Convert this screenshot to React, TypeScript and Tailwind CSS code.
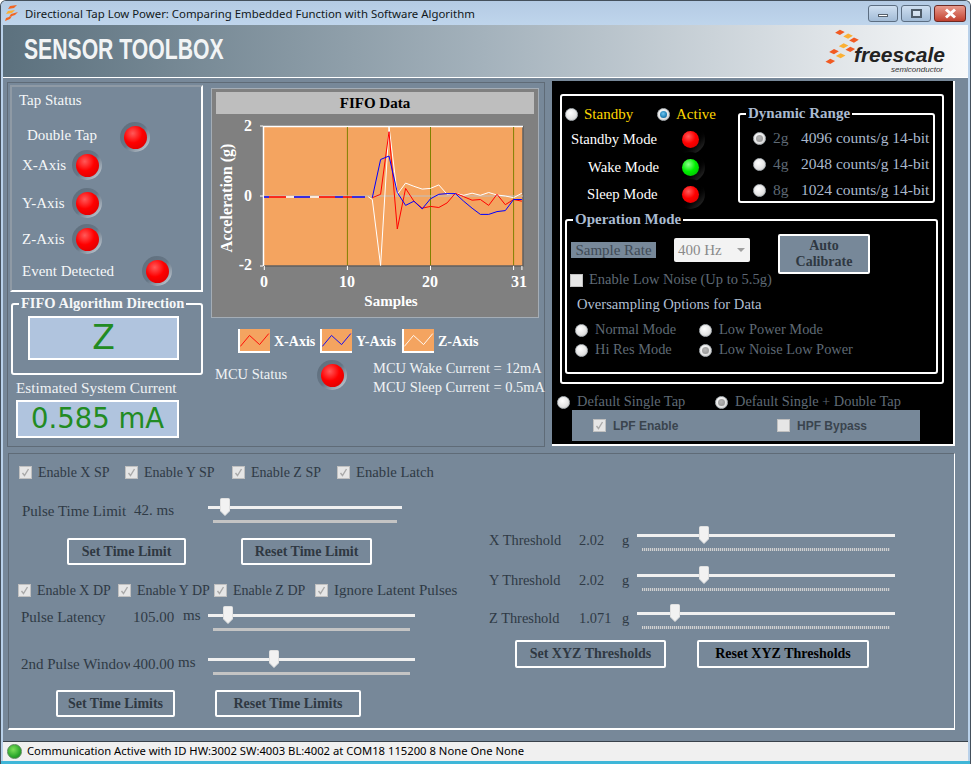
import React from "react";

const S = (s: number) => 264.3 + 8.31 * s;
const V = (v: number) => 196 - 34.75 * v;
const toPts = (d: [number, number][]) => d.map(([s, v]) => `${S(s).toFixed(1)},${V(v).toFixed(1)}`).join(" ");
const redData: [number, number][] = [[0,-0.02],[13,-0.05],[14,0.05],[15,1.85],[16,-0.95],[17,0.22],[18,-0.15],[19,-0.35],[20,-0.3],[21,-0.33],[22,-0.2],[23,0.08],[24,-0.02],[25,-0.12],[26,-0.1],[27,-0.27],[28,0.05],[29,-0.25],[30,-0.1],[31,-0.15]];
const blueData: [number, number][] = [[13,-0.05],[14,1.05],[15,1.15],[16,0.1],[17,-0.27],[18,-0.15],[19,-0.37],[20,-0.08],[21,0.05],[22,0.07],[23,0.07],[24,-0.15],[25,-0.35],[26,-0.53],[27,-0.53],[28,-0.45],[29,-0.42],[30,-0.1],[31,-0.1]];
const whiteData: [number, number][] = [[12.5,-0.02],[13,-0.1],[14,-2],[15,2],[16,0.05],[17,0.37],[18,0.28],[19,0.2],[20,0.22],[21,0.32],[22,0.05],[23,0.08],[24,0.02],[25,0.08],[26,0.02],[27,0.1],[28,0.03],[29,0],[30,-0.05],[31,0.08]];
const baseSegs: [number, number, string][] = [[264,269,"#0000ff"],[269,286,"#ff0000"],[286,294,"#ffffff"],[294,310,"#0000ff"],[310,319,"#ffffff"],[319,335,"#ff0000"],[335,343,"#0000ff"],[343,352,"#ff0000"],[352,365,"#0000ff"]];

function Led({ color = "red", dark = false }: { color?: string; dark?: boolean }) {
  return (
    <div className={`shrink-0 rounded-full flex items-center justify-center w-[30px] h-[30px] ${dark ? "bg-linear-to-br from-[#000000] via-[#000000] to-[#3a3a3a]" : "bg-linear-to-br from-[#5f6e7c] via-[#667686] to-[#d5dce2]"}`}>
      <div className={`rounded-full ${dark ? "w-[17px] h-[17px]" : "w-[23px] h-[23px]"} ${color === "red" ? "bg-[radial-gradient(circle_at_38%_32%,#ff5a5a_0%,#ff0000_45%,#d00000_100%)]" : "bg-[radial-gradient(circle_at_38%_32%,#8cff8c_0%,#00f000_45%,#00b000_100%)]"}`} />
    </div>
  );
}

function Radio({ state = "off" }: { state?: string }) {
  return (
    <div className="shrink-0 w-[13px] h-[13px] rounded-full flex items-center justify-center bg-[radial-gradient(circle_at_40%_35%,#ffffff_0%,#e4e4e4_60%,#bdbdbd_100%)] border border-[#aeb4b8]">
      {state === "on" && <div className="w-[7px] h-[7px] rounded-full bg-[radial-gradient(circle_at_45%_40%,#6fc5f0_0%,#1f7fb5_60%,#0d4f78_100%)]" />}
      {state === "dis" && <div className="w-[7px] h-[7px] rounded-full bg-[radial-gradient(circle_at_45%_40%,#b5b5b5_0%,#8f8f8f_100%)]" />}
    </div>
  );
}

function Check({ on = true }: { on?: boolean }) {
  return (
    <div className="shrink-0 w-[13px] h-[13px] bg-[#e6e6e6] border border-[#c0c0c0] flex items-center justify-center">
      {on && (
        <svg width="9" height="9" viewBox="0 0 9 9">
          <path d="M1.5 5 L3.5 7.5 L7.5 1" fill="none" stroke="#a9a9a9" strokeWidth="1.4" />
        </svg>
      )}
    </div>
  );
}

function Slider({ w, thumb, fine = false }: { w: number; thumb: number; fine?: boolean }) {
  return (
    <div className="relative h-[26px] shrink-0" style={{ width: w }}>
      <div className="absolute left-0 right-0 top-[6px] h-[3px] bg-[#f0f0f0]" />
      <div className={`absolute left-[5px] right-[5px] top-[20px] ${fine ? "h-[3px] bg-[repeating-linear-gradient(90deg,#d0d0d0_0,#d0d0d0_1px,#8b98a5_1px,#8b98a5_2px)]" : "h-[3px] bg-[#c4c4c4]"}`} />
      <svg className="absolute top-[-2px]" style={{ left: thumb - 5 }} width="10" height="18" viewBox="0 0 10 18">
        <path d="M1.5 0.5 H8.5 Q9.5 0.5 9.5 1.5 V13 L5 17.5 L0.5 13 V1.5 Q0.5 0.5 1.5 0.5 Z" fill="#f2f2f2" stroke="#e0e0e0" />
      </svg>
    </div>
  );
}

function Btn({ w, h = 27, dark = false, children, className = "" }: { w: number; h?: number; dark?: boolean; children: React.ReactNode; className?: string }) {
  return (
    <div
      className={`flex items-center justify-center rounded-[2px] border-2 border-white font-bold text-[14px] leading-[16px] text-center bg-[#778899] ${dark ? "text-[#000000]" : "text-[#2f3842]"} ${className}`}
      style={{ width: w, height: h }}
    >
      {children}
    </div>
  );
}

function Swatch({ color, label }: { color: string; label: string }) {
  return (
    <div className="flex items-center w-[82px]">
      <svg width="32" height="24" viewBox="0 0 32 24" className="shrink-0 bg-[#f4a460] border-b-2 border-l-2 border-white">
        <polyline points="0,19 10,7 21,17 31,5" fill="none" stroke={color} strokeWidth="1" />
      </svg>
      <span className="ml-[4px] font-bold text-[14px] text-white">{label}</span>
    </div>
  );
}

function RadioRow({ state, label, className = "" }: { state?: string; label: string; className?: string }) {
  return (
    <div className={`flex items-center ${className}`}>
      <Radio state={state} />
      <span className="ml-[7px] text-[14.4px] text-[#5f6a75]">{label}</span>
    </div>
  );
}

function CheckItem({ label, w, size = "text-[14px]" }: { label: string; w: number; size?: string }) {
  return (
    <div className="flex items-center" style={{ width: w }}>
      <Check />
      <span className={`ml-[6px] text-[#2f3a45] whitespace-nowrap ${size}`}>{label}</span>
    </div>
  );
}

function Logo() {
  const bars: [number, number, string][] = [[318, 97, "#f15a22"],[340, 107, "#fbb034"],[356, 118, "#f15a22"],[328, 133, "#fbb034"],[346, 143, "#f15a22"],[302, 149, "#f15a22"],[320, 160, "#fbb034"],[292, 175, "#f15a22"]];
  return (
    <svg width="37" height="37" viewBox="275 85 100 100" className="shrink-0">
      {bars.map(([x, y, c], i) => (
        <polygon key={i} points={`${x - 13},${y + 1} ${x},${y - 7} ${x + 13},${y - 1} ${x},${y + 7}`} fill={c} />
      ))}
    </svg>
  );
}

export default function App() {
  return (
    <div className="w-[971px] h-[764px] overflow-hidden flex flex-col bg-[#b9d1ea] font-['Liberation_Serif',serif] text-[15px] border-l border-r border-t border-[#44505c] rounded-t-[6px]">
      {/* title bar */}
      <div className="h-[24px] shrink-0 flex items-center bg-linear-to-b from-[#b4cbe4] to-[#bfd5ec] font-['Noto_Sans',sans-serif]">
        <svg width="16" height="18" viewBox="0 0 16 18" className="ml-[4px] shrink-0">
          <polygon points="5,2 12,1 9,4 3,5" fill="#f26522" />
          <polygon points="3,7 10,6 7,9 1,10" fill="#fbb034" />
          <polygon points="6,10 13,8 10,11 4,13" fill="#f26522" />
          <polygon points="1,14 7,12 5,15 0,17" fill="#f26522" />
        </svg>
        <span className="ml-[4px] mt-[2px] text-[11.4px] text-[#111820] whitespace-nowrap">Directional Tap Low Power: Comparing Embedded Function with Software Algorithm</span>
        <div className="ml-auto mr-[4px] flex gap-[3px]">
          <div className="w-[30px] h-[17px] rounded-[3px] border border-[#5c6e82] bg-linear-to-b from-[#cfe0f1] to-[#a2bbd6] flex items-center justify-center">
            <div className="w-[10px] h-[3px] mt-[5px] bg-white border border-[#55606c]" />
          </div>
          <div className="w-[30px] h-[17px] rounded-[3px] border border-[#5c6e82] bg-linear-to-b from-[#cfe0f1] to-[#a2bbd6] flex items-center justify-center">
            <div className="w-[11px] h-[9px] border-2 border-[#4f5c69] bg-white/40" />
          </div>
          <div className="w-[32px] h-[17px] rounded-[3px] border border-[#6e2a24] bg-linear-to-b from-[#e89a8d] to-[#c1402f] flex items-center justify-center">
            <svg width="13" height="11" viewBox="0 0 13 11">
              <path d="M2 1.5 L11 9.5 M11 1.5 L2 9.5" stroke="#ffffff" strokeWidth="3" />
            </svg>
          </div>
        </div>
      </div>

      {/* client */}
      <div className="mx-[2px] flex-1 flex flex-col bg-[#778899] min-h-0">
        {/* header */}
        <div className="h-[53px] shrink-0 flex items-center border-b border-white bg-linear-to-r from-[#5c717e] via-[#a4b2bc] to-[#f8f9fa]">
          <span className="ml-[21px] mb-[3px] font-['Liberation_Sans',sans-serif] font-bold text-[29px] text-[#f2f4f5] whitespace-nowrap scale-x-[0.73] origin-left">SENSOR TOOLBOX</span>
          <div className="ml-auto mr-[23px] flex items-start">
            <div className="mt-[1px] mr-[-7px]"><Logo /></div>
            <div className="flex flex-col items-end pt-[18px]">
              <span className="font-['Liberation_Sans',sans-serif] font-bold italic text-[21px] leading-[20px] text-[#222222]">freescale</span>
              <span className="font-['Liberation_Sans',sans-serif] italic text-[8px] leading-[10px] text-[#333333] mr-[2px]">semiconductor</span>
            </div>
          </div>
        </div>

        {/* upper area */}
        <div className="mt-[4px] flex h-[365px] shrink-0">
          <div className="ml-[4px] w-[538px] flex border border-[#5f6b77] pl-[2px] pt-[2px]">
            {/* left column */}
            <div className="w-[193px] shrink-0">
              <div className="h-[207px] border-2 border-[#8f9aa5] border-r-white border-b-white text-[#f5f7f8]">
                <div className="h-[26px] leading-[26px] pl-[7px]">Tap Status</div>
                <div className="mt-[10px] h-[28px] flex items-center pl-[15px]"><span className="w-[93px] mb-[4px]">Double Tap</span><Led /></div>
                <div className="h-[28px] flex items-center pl-[10px]"><span className="w-[50px]">X-Axis</span><Led /></div>
                <div className="mt-[10px] h-[28px] flex items-center pl-[10px]"><span className="w-[50px]">Y-Axis</span><Led /></div>
                <div className="mt-[8px] h-[28px] flex items-center pl-[10px]"><span className="w-[50px]">Z-Axis</span><Led /></div>
                <div className="mt-[4px] h-[28px] flex items-center pl-[10px]"><span className="w-[120px]">Event Detected</span><Led /></div>
              </div>
              <fieldset className="mt-[3px] ml-[1px] w-[192px] h-[80px] border-2 border-white rounded-[3px]">
                <legend className="ml-[6px] px-[2px] font-bold text-[14.5px] leading-[17px] text-[#f5f7f8]">FIFO Algorithm Direction</legend>
                <div className="mt-[4px] ml-[15px] w-[151px] h-[44px] border-2 border-white bg-[#b0c4de] flex items-center justify-center font-['DejaVu_Sans',sans-serif] text-[33px] text-[#228b22]">Z</div>
              </fieldset>
              <div className="mt-[4px] ml-[6px] h-[18px] leading-[18px] text-[15.3px] text-[#f0f2f4] whitespace-nowrap">Estimated System Current</div>
              <div className="mt-[3px] ml-[6px] w-[163px] h-[38px] border-2 border-white bg-[#b0c4de] flex items-center justify-center font-['DejaVu_Sans',sans-serif] text-[27.5px] text-[#228b22]">0.585 mA</div>
            </div>

            {/* chart column */}
            <div className="ml-[8px] w-[330px] shrink-0">
              <div className="mt-[3px] w-[328px] h-[230px] bg-[#808080] border border-[#a4adb6]">
                <div className="mx-[4px] mt-[3px] h-[22px] bg-[#bebebe] flex items-center justify-center font-bold text-[15px] text-black">FIFO Data</div>
                <svg width="326" height="204" viewBox="212 114 326 204" className="block">
                  <rect x="263" y="126" width="260" height="140" fill="#f4a460" />
                  <path d="M263 266 H523 V126" fill="none" stroke="#5f5f5f" strokeWidth="1.5" />
                  <path d="M263.5 266 V126.5 H523" fill="none" stroke="#ffffff" strokeWidth="1.5" />
                  {[10, 20, 30].map((s) => <line key={s} x1={S(s)} x2={S(s)} y1="127" y2="265" stroke="#808000" strokeWidth="1" />)}
                  <line x1="264" x2="523" y1="196" y2="196" stroke="#c0c0c0" strokeWidth="1" />
                  <polyline points={toPts(whiteData)} fill="none" stroke="#ffffff" strokeWidth="1" />
                  <polyline points={toPts(redData.slice(1))} fill="none" stroke="#ff0000" strokeWidth="1" />
                  <polyline points={toPts(blueData)} fill="none" stroke="#0000ff" strokeWidth="1" />
                  {baseSegs.map(([a, b, c], i) => <line key={i} x1={a} x2={b} y1="197" y2="197" stroke={c} strokeWidth="1.4" />)}
                  {[126, 196, 266].map((y) => <line key={y} x1="260" x2="263" y1={y} y2={y} stroke="#ffffff" />)}
                  {[0, 10, 20, 30, 31].map((s) => <line key={s} x1={S(s)} x2={S(s)} y1="266" y2="270" stroke="#ffffff" />)}
                  <g fontFamily="'Liberation Serif',serif" fontSize="16" fontWeight="700" fill="#ffffff">
                    <text x="252" y="131" textAnchor="end">2</text>
                    <text x="252" y="201" textAnchor="end">0</text>
                    <text x="252" y="270" textAnchor="end">-2</text>
                    <text x="264" y="287" textAnchor="middle">0</text>
                    <text x="347" y="287" textAnchor="middle">10</text>
                    <text x="430" y="287" textAnchor="middle">20</text>
                    <text x="519" y="287" textAnchor="middle">31</text>
                    <text x="391" y="306" textAnchor="middle" fontSize="15">Samples</text>
                    <text transform="translate(232,198) rotate(-90)" textAnchor="middle" fontSize="16">Acceleration (g)</text>
                  </g>
                </svg>
              </div>
              <div className="mt-[11px] ml-[27px] flex">
                <Swatch color="#ff0000" label="X-Axis" />
                <Swatch color="#0000ff" label="Y-Axis" />
                <Swatch color="#ffffff" label="Z-Axis" />
              </div>
              <div className="mt-[6px] h-[42px] flex items-start text-[#f0f3f5] text-[14.5px]">
                <span className="ml-[4px] mt-[5px] w-[102px] shrink-0">MCU Status</span>
                <div className="mt-[1px] shrink-0"><Led /></div>
                <div className="ml-[26px] shrink-0 whitespace-nowrap leading-[19px]">
                  <div>MCU Wake Current = 12mA</div>
                  <div>MCU Sleep Current = 0.5mA</div>
                </div>
              </div>
            </div>
          </div>

          {/* black panel */}
          <div className="ml-[7px] w-[403px] -mt-[1px] h-[365px] bg-black border-r-2 border-b-2 border-white">
            <div className="mt-[13px] ml-[8px] w-[384px] h-[290px] border-2 border-white rounded-[3px]">
              <div className="flex h-[107px]">
                <div className="w-[176px] pt-[8px]">
                  <div className="flex items-center h-[20px] pl-[3px] text-[#ffd700]">
                    <Radio /><span className="ml-[6px] w-[73px]">Standby</span><Radio state="on" /><span className="ml-[6px]">Active</span>
                  </div>
                  <div className="mt-[3px] h-[24px] flex items-center text-white pl-[9px] text-[14.7px]"><span className="w-[104px]">Standby Mode</span><Led dark /></div>
                  <div className="mt-[4px] h-[24px] flex items-center text-white pl-[26px] text-[14.7px]"><span className="w-[87px]">Wake Mode</span><Led dark color="green" /></div>
                  <div className="mt-[3px] h-[24px] flex items-center text-white pl-[25px] text-[14.7px]"><span className="w-[88px]">Sleep Mode</span><Led dark /></div>
                </div>
                <fieldset className="mt-[9px] w-[197px] h-[98px] border-2 border-white rounded-[3px]">
                  <legend className="ml-[6px] px-[2px] font-bold text-[15px] leading-[17px] text-[#aabbd0]">Dynamic Range</legend>
                  <div className="pl-[13px] text-[#aab9cc] text-[15.5px]">
                    <div className="h-[26px] mt-[3px] flex items-center"><Radio state="dis" /><span className="ml-[7px] w-[28px] text-[#5f6a75]">2g</span><span className="whitespace-nowrap">4096 counts/g 14-bit</span></div>
                    <div className="h-[26px] flex items-center"><Radio /><span className="ml-[7px] w-[28px] text-[#5f6a75]">4g</span><span className="whitespace-nowrap">2048 counts/g 14-bit</span></div>
                    <div className="h-[26px] flex items-center"><Radio /><span className="ml-[7px] w-[28px] text-[#5f6a75]">8g</span><span className="whitespace-nowrap">1024 counts/g 14-bit</span></div>
                  </div>
                </fieldset>
              </div>
              <fieldset className="mt-[8px] ml-[3px] w-[373px] h-[163px] border-2 border-white rounded-[3px]">
                <legend className="ml-[6px] px-[2px] font-bold text-[15px] leading-[17px] text-[#aabbd0]">Operation Mode</legend>
                <div className="mt-[6px] flex items-start">
                  <div className="ml-[4px] mt-[8px] w-[85px] h-[16px] leading-[16px] bg-[#778899] text-[#3f4a55] text-center">Sample Rate</div>
                  <div className="ml-[18px] mt-[4px] w-[76px] h-[24px] rounded-[2px] bg-[#f3f3f3] flex items-center pl-[4px] text-[#8a8a8a]">
                    400 Hz
                    <div className="ml-auto mr-[5px] w-0 h-0 border-l-[4px] border-r-[4px] border-t-[4px] border-l-transparent border-r-transparent border-t-[#a0a0a0]" />
                  </div>
                  <Btn w={92} h={40} className="ml-[28px]">Auto<br />Calibrate</Btn>
                </div>
                <div className="-mt-[2px] ml-[3px] h-[16px] flex items-center"><Check on={false} /><span className="ml-[6px] text-[14.5px] text-[#5f6a75]">Enable Low Noise (Up to 5.5g)</span></div>
                <div className="mt-[7px] ml-[10px] h-[18px] leading-[18px] text-[14.6px] text-[#b0bfd2]">Oversampling Options for Data</div>
                <div className="mt-[7px] ml-[8px] flex">
                  <div className="w-[124px]">
                    <RadioRow label="Normal Mode" className="h-[20px]" />
                    <RadioRow label="Hi Res Mode" className="h-[20px]" />
                  </div>
                  <div>
                    <RadioRow label="Low Power Mode" className="h-[20px]" />
                    <RadioRow state="dis" label="Low Noise Low Power" className="h-[20px]" />
                  </div>
                </div>
              </fieldset>
            </div>
            <div className="mt-[9px] ml-[5px] h-[18px] flex items-center">
              <RadioRow label="Default Single Tap" className="w-[158px]" />
              <RadioRow state="dis" label="Default Single + Double Tap" />
            </div>
            <div className="ml-[20px] -mt-[1px] w-[348px] h-[31px] bg-[#778899] flex items-center pl-[21px] font-['Liberation_Sans',sans-serif] font-bold text-[12px] text-[#3a444e]">
              <Check /><span className="ml-[7px] w-[164px]">LPF Enable</span><Check on={false} /><span className="ml-[7px]">HPF Bypass</span>
            </div>
          </div>
        </div>

        {/* bottom panel */}
        <div className="mt-[6px] ml-[5px] w-[947px] h-[277px] shrink-0 flex border border-[#5f6b77] border-r-white border-b-2 border-b-white text-[#2f3a45]">
          <div className="w-[480px] shrink-0">
            <div className="mt-[9px] h-[18px] pl-[10px] flex">
              <CheckItem label="Enable X SP" w={106} />
              <CheckItem label="Enable Y SP" w={107} />
              <CheckItem label="Enable Z SP" w={105} />
              <CheckItem label="Enable Latch" w={110} size="text-[14.7px]" />
            </div>
            <div className="mt-[19px] h-[26px] flex items-start">
              <span className="ml-[13px] w-[112px] h-[22px] leading-[22px] whitespace-nowrap">Pulse Time Limit</span>
              <span className="w-[74px] h-[22px] leading-[20px] whitespace-nowrap">42. ms</span>
              <Slider w={194} thumb={17} />
            </div>
            <div className="mt-[12px] flex">
              <Btn w={119} className="ml-[58px]">Set Time Limit</Btn>
              <Btn w={131} className="ml-[55px]">Reset Time Limit</Btn>
            </div>
            <div className="mt-[16px] h-[18px] pl-[9px] flex">
              <CheckItem label="Enable X DP" w={100} />
              <CheckItem label="Enable Y DP" w={96} />
              <CheckItem label="Enable Z DP" w={101} />
              <CheckItem label="Ignore Latent Pulses" w={140} size="text-[15px]" />
            </div>
            <div className="mt-[9px] h-[26px] flex items-start">
              <span className="ml-[12px] w-[112px] h-[18px] leading-[18px]">Pulse Latency</span>
              <span className="w-[50px] h-[18px] leading-[18px]">105.00</span>
              <span className="w-[25px] h-[14px] leading-[14px]">ms</span>
              <Slider w={207} thumb={20} />
            </div>
            <div className="mt-[18px] h-[26px] flex items-start">
              <span className="ml-[12px] mr-[3px] w-[109px] h-[24px] leading-[24px] overflow-hidden whitespace-nowrap">2nd Pulse Window</span>
              <span className="w-[45px] h-[24px] leading-[24px]">400.00</span>
              <span className="w-[30px] h-[20px] leading-[20px]">ms</span>
              <Slider w={207} thumb={66} />
            </div>
            <div className="mt-[12px] flex">
              <Btn w={119} className="ml-[47px]">Set Time Limits</Btn>
              <Btn w={146} className="ml-[40px]">Reset Time Limits</Btn>
            </div>
          </div>
          <div className="pt-[74px] flex-1 text-[14.4px]">
            <div className="h-[26px] flex items-start">
              <span className="w-[90px] h-[24px] leading-[24px]">X Threshold</span><span className="w-[43px] h-[24px] leading-[24px]">2.02</span><span className="w-[15px] h-[24px] leading-[24px]">g</span>
              <Slider w={258} thumb={67} fine />
            </div>
            <div className="mt-[14px] h-[26px] flex items-start">
              <span className="w-[90px] h-[24px] leading-[24px]">Y Threshold</span><span className="w-[43px] h-[24px] leading-[24px]">2.02</span><span className="w-[15px] h-[24px] leading-[24px]">g</span>
              <Slider w={258} thumb={67} fine />
            </div>
            <div className="mt-[12px] h-[26px] flex items-start">
              <span className="w-[90px] h-[24px] leading-[24px]">Z Threshold</span><span className="w-[43px] h-[24px] leading-[24px]">1.071</span><span className="w-[15px] h-[24px] leading-[24px]">g</span>
              <Slider w={258} thumb={38} fine />
            </div>
            <div className="mt-[8px] flex">
              <Btn w={151} h={28} className="ml-[26px]">Set XYZ Thresholds</Btn>
              <Btn w={172} h={28} dark className="ml-[31px]">Reset XYZ Thresholds</Btn>
            </div>
          </div>
        </div>

        <div className="mt-auto h-[20px] shrink-0 bg-[#f0f0f0] flex items-center border-t border-[#39424b] font-['Noto_Sans',sans-serif] text-[11.25px] text-black">
          <div className="ml-[4px] w-[15px] h-[15px] rounded-full bg-[radial-gradient(circle_at_40%_35%,#7ee05a,#2ca82c_60%,#157a15)] border border-[#5a8a5a]" />
          <span className="ml-[5px] whitespace-nowrap">Communication Active with ID HW:3002 SW:4003 BL:4002 at COM18 115200 8 None One None</span>
        </div>
      </div>
      <div className="h-[3px] shrink-0 bg-[#3fb6d8]" />
    </div>
  );
}
